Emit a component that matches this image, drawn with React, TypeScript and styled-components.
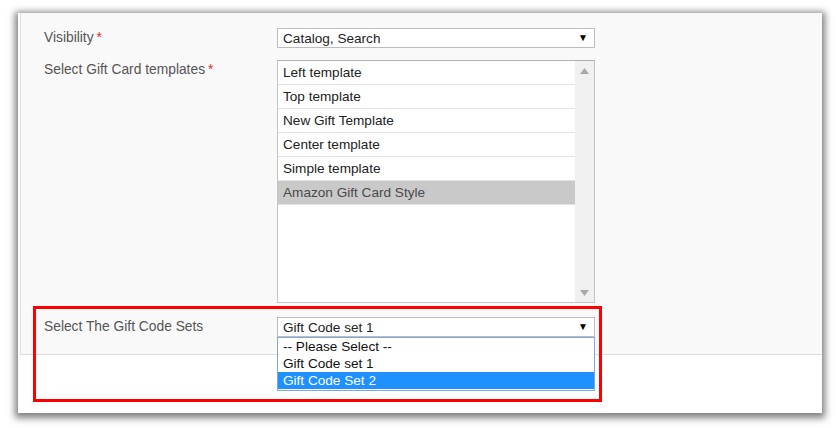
import React from "react";
import styled, { createGlobalStyle } from "styled-components";

const Global = createGlobalStyle`
  html, body { margin: 0; padding: 0; background: #ffffff; }
  body { font-family: "Liberation Sans", Arial, sans-serif; }
`;

const Page = styled.div`
  width: 840px;
  height: 428px;
  padding: 13px 0 0 18px;
  box-sizing: border-box;
`;

const Panel = styled.div`
  position: relative;
  width: 804px;
  height: 400px;
  background: #ffffff;
  box-shadow: 0 2px 7px 3px rgba(0, 0, 0, 0.5);
`;

const Fieldset = styled.div`
  margin-left: 2px;
  height: 342px;
  box-sizing: border-box;
  background: #f9f9f9;
  border-left: 1px solid #e2e2e2;
  border-bottom: 1px solid #dcdcdc;
  padding: 15px 0 18px 23px;
  display: flex;
  flex-direction: column;
`;

const Row = styled.div<{ $gap: number }>`
  display: grid;
  grid-template-columns: 233px 318px;
  margin-top: ${(p) => p.$gap}px;
`;

const Label = styled.div`
  font-size: 13.8px;
  line-height: 20px;
  color: #555555;
`;

const Star = styled.span`
  color: #e02b27;
  margin-left: 3px;
`;

const SelectBox = styled.div`
  position: relative;
  height: 20px;
  box-sizing: border-box;
  background: #ffffff;
  border: 1px solid #bdbdbd;
  display: flex;
  align-items: center;
  justify-content: space-between;
  padding: 0 6px 0 5px;
  font-size: 13.6px;
  color: #222222;
`;

const Arrow = styled.span`
  font-size: 10px;
  color: #000000;
  line-height: 1;
`;

const ListBox = styled.div`
  height: 243px;
  box-sizing: border-box;
  border: 1px solid #c4c4c4;
  border-top-color: #b0b0b0;
  background: #ffffff;
  display: flex;
`;

const Items = styled.div`
  flex: 1;
  display: flex;
  flex-direction: column;
`;

const Item = styled.div<{ $selected?: boolean }>`
  height: 24px;
  box-sizing: border-box;
  border-bottom: 1px solid #e3e3e3;
  padding-left: 5px;
  display: flex;
  align-items: center;
  font-size: 13.6px;
  color: ${(p) => (p.$selected ? "#4a4a4a" : "#222222")};
  background: ${(p) => (p.$selected ? "#c9c9c9" : "#ffffff")};
`;

const Scrollbar = styled.div`
  width: 19px;
  background: #f0f0f0;
  display: flex;
  flex-direction: column;
  justify-content: space-between;
  align-items: center;
  padding: 7px 0 6px;
`;

const DropList = styled.div`
  position: absolute;
  left: -1px;
  top: 19px;
  width: 318px;
  box-sizing: border-box;
  border: 1px solid #7fa9d9;
  background: #ffffff;
  z-index: 2;
  padding-bottom: 1px;
`;

const Option = styled.div<{ $active?: boolean }>`
  height: 17px;
  line-height: 17px;
  padding-left: 5px;
  font-size: 13.6px;
  color: ${(p) => (p.$active ? "#ffffff" : "#111111")};
  background: ${(p) => (p.$active ? "#1e90ff" : "transparent")};
`;

const Highlight = styled.div`
  position: absolute;
  left: 15px;
  top: 293px;
  width: 569px;
  height: 96px;
  box-sizing: border-box;
  border: 3px solid #ff0000;
  pointer-events: none;
  z-index: 3;
`;

const Tri = ({ up }: { up?: boolean }) => (
  <svg width="9" height="6" viewBox="0 0 9 6">
    <path d={up ? "M0 6 L4.5 0 L9 6 Z" : "M0 0 L4.5 6 L9 0 Z"} fill="#a8a8a8" />
  </svg>
);

const templates = [
  "Left template",
  "Top template",
  "New Gift Template",
  "Center template",
  "Simple template",
  "Amazon Gift Card Style",
];

export default function App() {
  return (
    <Page>
      <Global />
      <Panel>
        <Fieldset>
          <Row $gap={0}>
            <Label>
              Visibility<Star>*</Star>
            </Label>
            <SelectBox>
              <span>Catalog, Search</span>
              <Arrow>▼</Arrow>
            </SelectBox>
          </Row>
          <Row $gap={12}>
            <Label>
              Select Gift Card templates<Star>*</Star>
            </Label>
            <ListBox>
              <Items>
                {templates.map((t, i) => (
                  <Item key={t} $selected={i === templates.length - 1}>
                    {t}
                  </Item>
                ))}
              </Items>
              <Scrollbar>
                <Tri up />
                <Tri />
              </Scrollbar>
            </ListBox>
          </Row>
          <Row $gap={14}>
            <Label>Select The Gift Code Sets</Label>
            <SelectBox>
              <span>Gift Code set 1</span>
              <Arrow>▼</Arrow>
              <DropList>
                <Option>-- Please Select --</Option>
                <Option>Gift Code set 1</Option>
                <Option $active>Gift Code Set 2</Option>
              </DropList>
            </SelectBox>
          </Row>
        </Fieldset>
        <Highlight />
      </Panel>
    </Page>
  );
}
